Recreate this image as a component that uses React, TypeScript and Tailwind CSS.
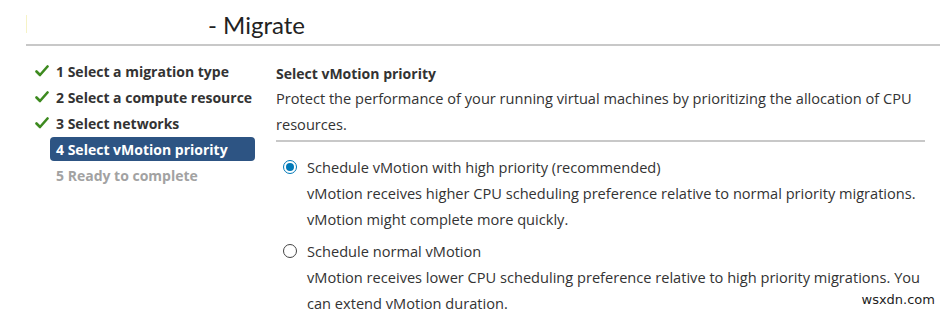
import React from "react";

const steps = [
  { n: 1, label: "Select a migration type", state: "done" },
  { n: 2, label: "Select a compute resource", state: "done" },
  { n: 3, label: "Select networks", state: "done" },
  { n: 4, label: "Select vMotion priority", state: "active" },
  { n: 5, label: "Ready to complete", state: "todo" },
];

function Check() {
  return (
    <svg width="14" height="12" viewBox="0 0 14 12" className="shrink-0">
      <path d="M1.5 6.5 L5 10 L12.5 1.5" fill="none" stroke="#3d8a1f" strokeWidth="2.6" strokeLinecap="round" strokeLinejoin="round" />
    </svg>
  );
}

function Radio({ checked }: { checked: boolean }) {
  return (
    <span
      className={`w-[14px] h-[14px] rounded-full border flex items-center justify-center shrink-0 ${
        checked ? "border-[#0079b8]" : "border-[#444]"
      }`}
    >
      {checked && <span className="w-[8px] h-[8px] rounded-full bg-[#0079b8]" />}
    </span>
  );
}

export default function App() {
  return (
    <div className="relative w-[947px] h-[315px] bg-white overflow-hidden text-[#333]" style={{ fontFamily: "'Open Sans', sans-serif" }}>
      {/* Title bar */}
      <div className="ml-[26px] mr-[7px] h-[46px] border-b-2 border-[#c8c8c8] flex items-center">
        <div className="w-px h-[18px] bg-[#f6f3c6] mt-[4px]" />
        <div className="ml-[181px] text-[24px] text-[#222] mt-[6px]" style={{ fontFamily: "Lato, sans-serif" }}>- Migrate</div>
      </div>

      <div className="flex mt-[12px]">
        {/* Steps */}
        <div className="w-[276px] pl-[35px] flex flex-col">
          {steps.map((s) => (
            <div key={s.n} className="h-[26px] flex items-center">
              <div className="w-[15px] flex items-center">{s.state === "done" && <Check />}</div>
              <div
                className={`h-[24px] flex items-center text-[14px] font-bold rounded-[4px] ${
                  s.state === "active"
                    ? "bg-[#2d5483] text-white pl-[6px] w-[205px]"
                    : s.state === "todo"
                    ? "text-[#a2a2a2] ml-[6px]"
                    : "text-[#333] ml-[6px]"
                }`}
              >
                {s.n} {s.label}
              </div>
            </div>
          ))}
        </div>

        {/* Content */}
        <div className="flex-1 pr-[22px]">
          <div className="h-[26px] mt-[2px] -mb-[1px] flex items-center text-[14px] font-bold">Select vMotion priority</div>
          <div className="text-[14.6px] leading-[26px]">
            Protect the performance of your running virtual machines by prioritizing the allocation of CPU
            <br />
            resources.
          </div>
          <div className="mt-[3px] border-b-2 border-[#c8c8c8]" />

          <div className="pl-[7px] mt-[12px] text-[14.6px] leading-[26px]">
            <div className="flex items-center gap-[10px]">
              <Radio checked />
              <span>Schedule vMotion with high priority (recommended)</span>
            </div>
            <div className="pl-[24px] whitespace-nowrap">
              vMotion receives higher CPU scheduling preference relative to normal priority migrations.
              <br />
              vMotion might complete more quickly.
            </div>
            <div className="flex items-center gap-[10px] mt-[6px]">
              <Radio checked={false} />
              <span>Schedule normal vMotion</span>
            </div>
            <div className="pl-[24px] whitespace-nowrap">
              vMotion receives lower CPU scheduling preference relative to high priority migrations. You
              <br />
              can extend vMotion duration.
            </div>
          </div>
        </div>
      </div>

      <div className="absolute right-[12px] bottom-[6px] text-[13px] text-[#222]" style={{ fontFamily: "'DejaVu Sans', sans-serif" }}>
        wsxdn.com
      </div>
    </div>
  );
}
